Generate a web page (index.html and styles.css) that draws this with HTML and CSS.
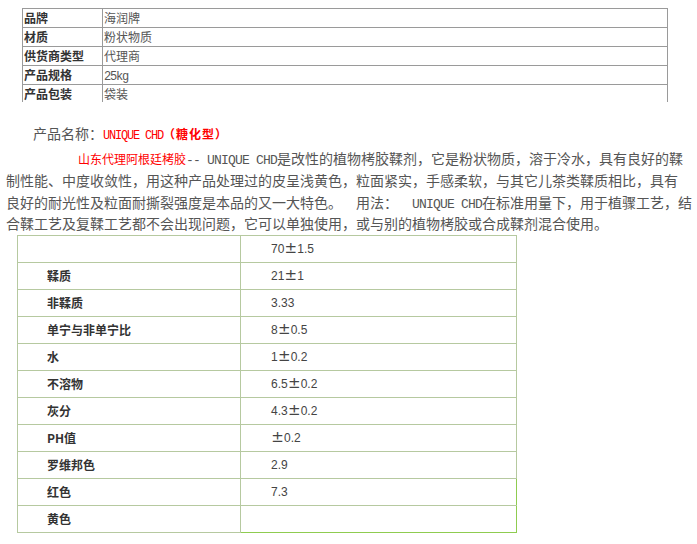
FILE: index.html
```html
<!DOCTYPE html>
<html lang="zh">
<head>
<meta charset="utf-8">
<link rel="stylesheet" href="styles.css">
</head>
<body>
<div class="spec-wrap">
  <table class="spec">
    <tr><td class="k">品牌</td><td class="v">海润牌</td></tr>
    <tr><td class="k">材质</td><td class="v">粉状物质</td></tr>
    <tr><td class="k">供货商类型</td><td class="v">代理商</td></tr>
    <tr><td class="k">产品规格</td><td class="v"><span class="lat-s">25kg</span></td></tr>
    <tr><td class="k">产品包装</td><td class="v">袋装</td></tr>
  </table>
</div>

<p class="title">产品名称：<span class="red"><span class="lat-s">UNIQUE CHD</span><b>（糖化型）</b></span></p>

<p class="desc"><span class="indent"></span><span class="red sm">山东代理阿根廷栲胶</span><span class="lat">-- UNIQUE CHD</span>是改性的植物栲胶鞣剂，它是粉状物质，溶于冷水，具有良好的鞣<br>制性能、中度收敛性，用这种产品处理过的皮呈浅黄色，粒面紧实，手感柔软，与其它儿茶类鞣质相比，具有<br>良好的耐光性及粒面耐撕裂强度是本品的又一大特色。<span class="lat">  </span>用法：<span class="lat">  UNIQUE CHD</span>在标准用量下，用于植骤工艺，结<br>合鞣工艺及复鞣工艺都不会出现问题，它可以单独使用，或与别的植物栲胶或合成鞣剂混合使用。</p>

<table class="data">
  <tr><td class="k"></td><td class="v">70<span class="pm">±</span>1.5</td></tr>
  <tr><td class="k">鞣质</td><td class="v">21<span class="pm">±</span>1</td></tr>
  <tr><td class="k">非鞣质</td><td class="v">3.33</td></tr>
  <tr><td class="k">单宁与非单宁比</td><td class="v">8<span class="pm">±</span>0.5</td></tr>
  <tr><td class="k">水</td><td class="v">1<span class="pm">±</span>0.2</td></tr>
  <tr><td class="k">不溶物</td><td class="v">6.5<span class="pm">±</span>0.2</td></tr>
  <tr><td class="k">灰分</td><td class="v">4.3<span class="pm">±</span>0.2</td></tr>
  <tr><td class="k">PH值</td><td class="v"><span class="pm">±</span>0.2</td></tr>
  <tr><td class="k">罗维邦色</td><td class="v">2.9</td></tr>
  <tr><td class="k">红色</td><td class="v hl">7.3</td></tr>
  <tr><td class="k">黄色</td><td class="v hl hl-b"></td></tr>
</table>
</body>
</html>
```
FILE: styles.css
```css
html, body {
  margin: 0;
  padding: 0;
  background: #fff;
}
body {
  font-family: "Noto Sans CJK SC", "Noto Sans", sans-serif;
  font-size: 12px;
  color: #444;
}
.spec-wrap {
  margin: 8px 0 0 22px;
  width: 646px;
  height: 94px;
  overflow: hidden;
}
.spec {
  border-collapse: collapse;
  width: 646px;
  table-layout: fixed;
}
.spec td {
  border: 1px solid #9a9a9a;
  height: 18px;
  padding: 0 2px 0 1px;
  line-height: 18px;
  font-size: 12px;
  white-space: nowrap;
}
.spec td.k {
  width: 76px;
  font-weight: bold;
  color: #333;
}
.spec td.v {
  color: #555;
}
.lat {
  font-family: "Liberation Mono", "DejaVu Sans Mono", monospace;
  font-size: 13px;
  letter-spacing: -0.8px;
  line-height: 1;
  white-space: pre;
}
.lat-s {
  font-family: "Liberation Mono", "DejaVu Sans Mono", monospace;
  font-size: 12px;
  letter-spacing: -1.2px;
  line-height: 1;
}
.red {
  color: #f00;
}
.red b {
  font-weight: bold;
  font-size: 12px;
  line-height: 1;
  letter-spacing: 1px;
}
.sm {
  font-size: 12px;
  line-height: 1;
}
.title {
  margin: 20px 0 0 33px;
  font-size: 14px;
  line-height: 22px;
  height: 22px;
  color: #555;
  white-space: nowrap;
}
.desc {
  margin: 4px 0 0 6px;
  font-size: 14px;
  line-height: 21.75px;
  color: #555;
  white-space: nowrap;
}
.indent {
  display: inline-block;
  width: 72px;
}
.data {
  margin-left: 17px;
  border-collapse: collapse;
  width: 500px;
  table-layout: fixed;
}
.data td {
  border: 1px solid #b6c9a0;
  height: 26px;
  padding: 0;
  line-height: 26px;
  white-space: nowrap;
}
.data td.k {
  width: 193px;
  padding-left: 29px;
  font-weight: bold;
  color: #333;
  font-size: 12px;
}
.data td.v {
  padding-left: 30px;
  font-family: "Liberation Sans", Arial, sans-serif;
  font-size: 12px;
  color: #444;
}
.pm {
  display: inline-block;
  width: 13px;
  text-align: center;
  font-family: "DejaVu Sans", sans-serif;
  font-size: 15px;
  line-height: 1;
}
.data td.hl {
  border-right-color: #8fcc50;
}
.data td.hl-b {
  border-bottom-color: #8fcc50;
}
```
